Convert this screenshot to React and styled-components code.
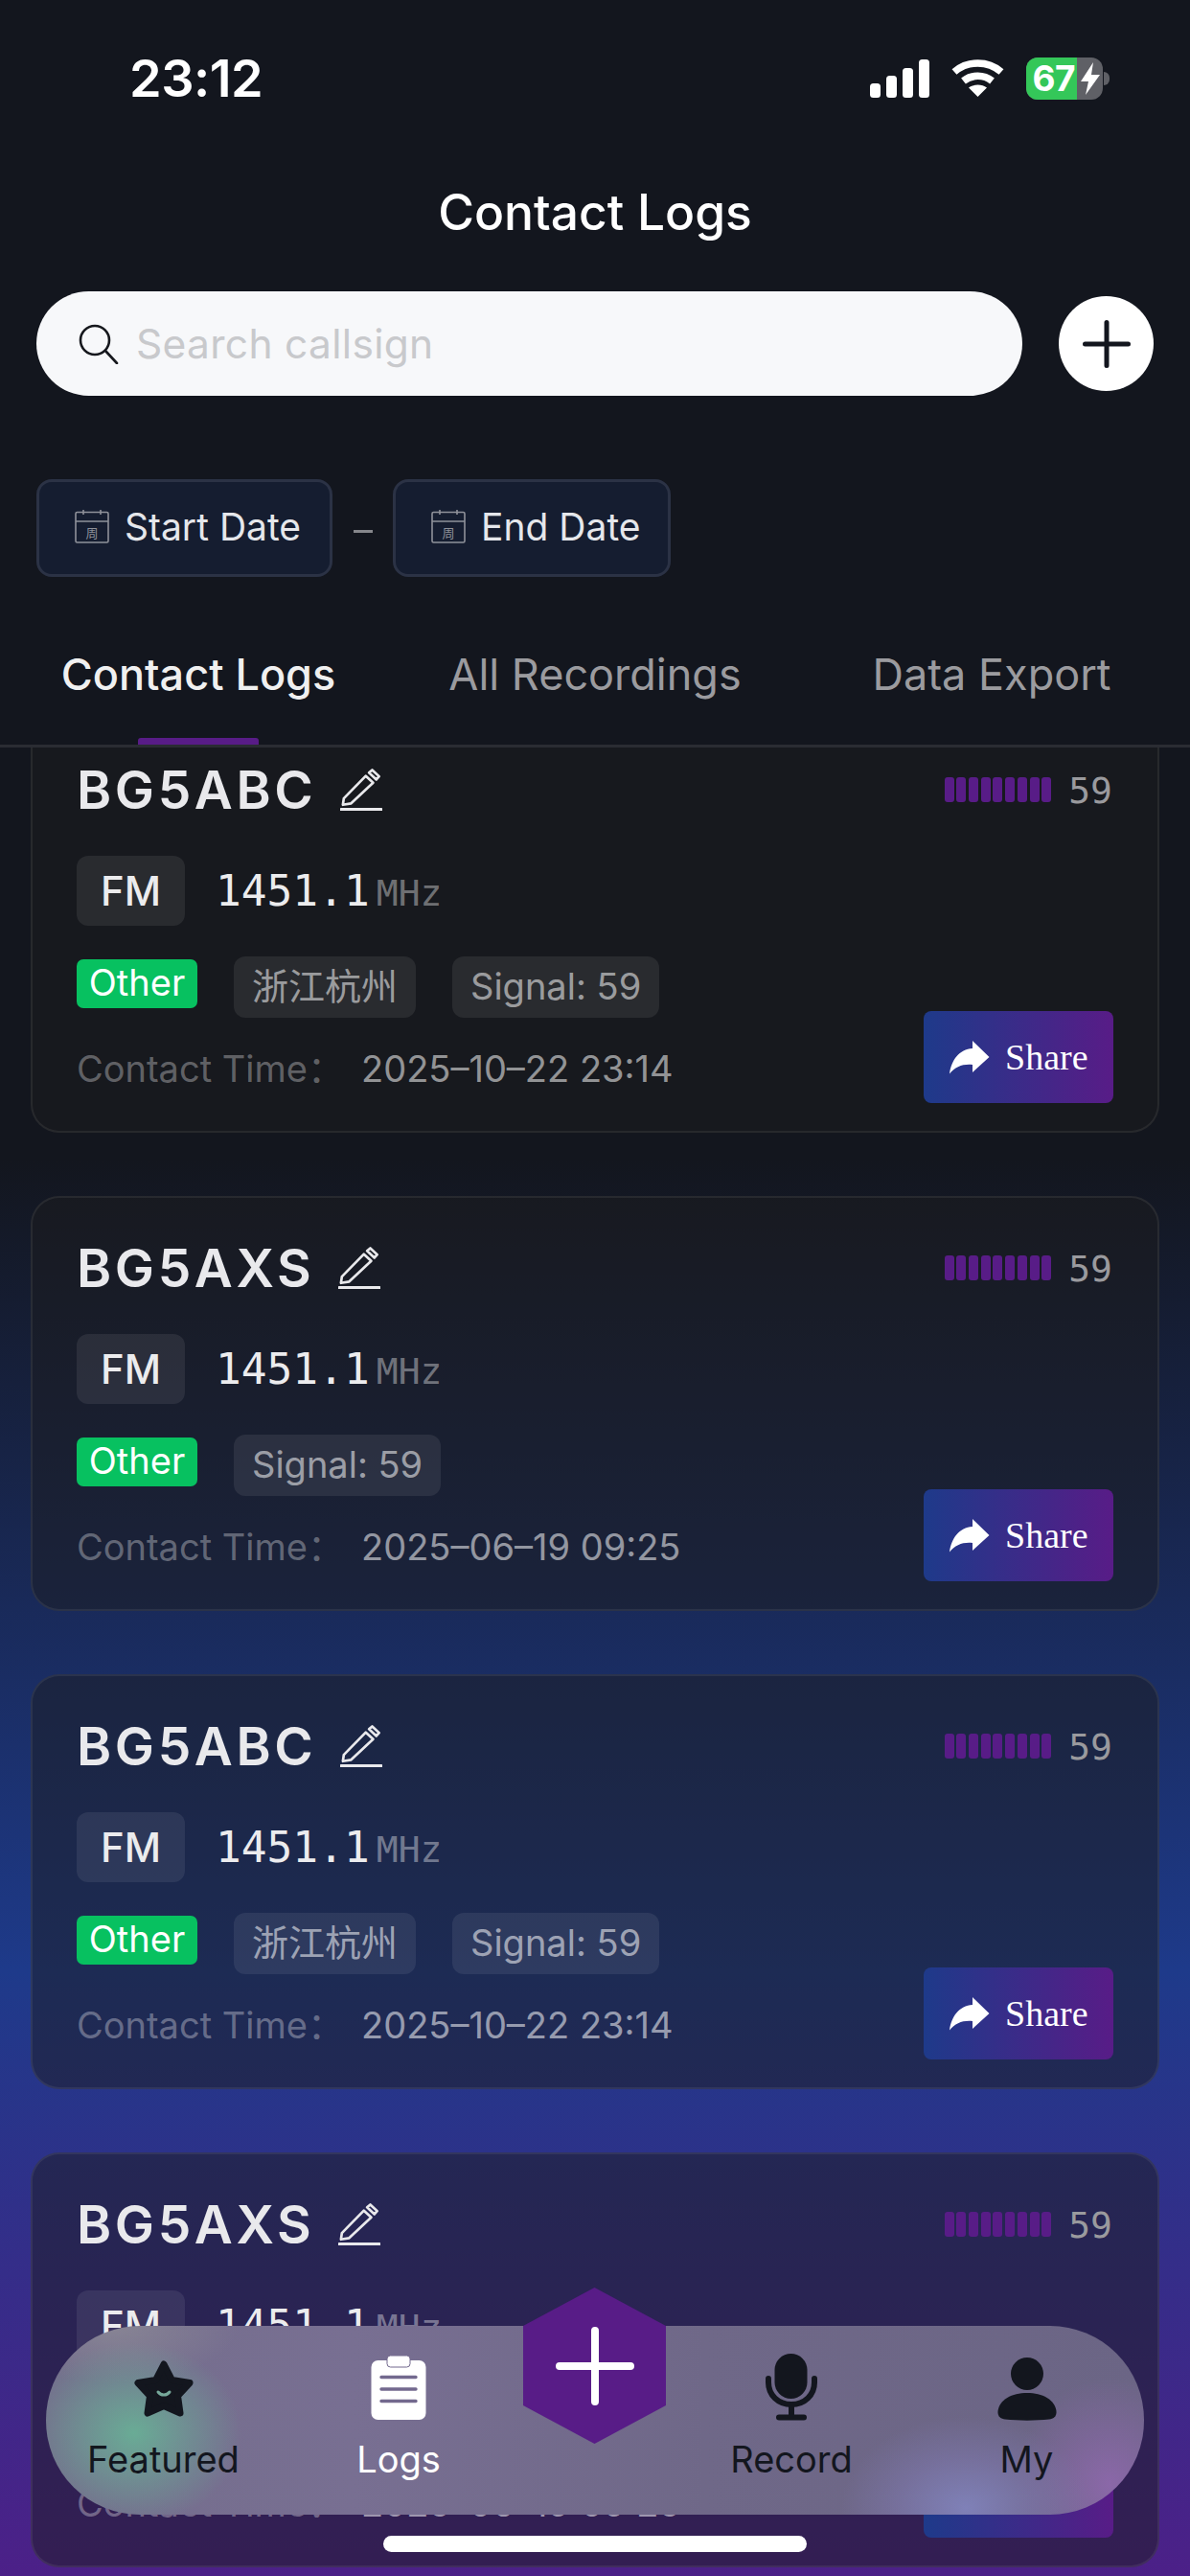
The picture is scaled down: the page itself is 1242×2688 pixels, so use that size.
import React from 'react';
import styled, { createGlobalStyle } from 'styled-components';

const GlobalStyle = createGlobalStyle`
  html, body { margin: 0; padding: 0; background: #13161e; }
  * { box-sizing: border-box; }
`;

const SANS = `Inter, "Noto Sans CJK SC", sans-serif`;
const MONO = `"DejaVu Sans Mono", monospace`;

const Page = styled.div`
  position: relative;
  width: 1242px;
  height: 2688px;
  overflow: hidden;
  display: flex;
  flex-direction: column;
  font-family: ${SANS};
  color: #fff;
  background: linear-gradient(180deg, #13161e 0, #13161e 45%, #1e3a8a 76.5%, #4c2088 100%);
`;

const Header = styled.header`
  position: relative;
  z-index: 2;
  flex: none;
  height: 780px;
  background: #13161e;
  border-bottom: 3px solid #2a2c33;
  display: flex;
  flex-direction: column;
`;

const StatusBar = styled.div`
  height: 164px;
  flex: none;
  display: flex;
  align-items: flex-start;
  justify-content: space-between;
  padding: 58px 84px 0 135px;
`;

const Clock = styled.div`
  font-size: 54px;
  line-height: 48px;
  font-weight: 600;
  letter-spacing: -0.5px;
`;

const StatusIcons = styled.div`
  display: flex;
  align-items: center;
  gap: 23px;
  margin-top: 2px;
`;

const Battery = styled.div`
  position: relative;
  width: 87px;
  height: 44px;
  display: flex;
  align-items: center;
`;

const BatteryBody = styled.div`
  width: 80px;
  height: 44px;
  border-radius: 12px;
  overflow: hidden;
  display: flex;
  background: #5f6066;
`;

const BatteryFill = styled.div`
  width: 53px;
  background: #34c759;
  font-size: 37px;
  font-weight: 700;
  line-height: 44px;
  text-align: right;
  padding-right: 2px;
  letter-spacing: -0.5px;
`;

const BatteryNub = styled.div`
  position: absolute;
  right: 0;
  top: 15px;
  width: 6px;
  height: 14px;
  border-radius: 0 7px 7px 0;
  background: #5f6066;
`;

const BoltSlot = styled.div`
  flex: 1;
  display: flex;
  align-items: center;
  justify-content: center;
`;

const Title = styled.h1`
  margin: 0;
  height: 140px;
  flex: none;
  padding-top: 32px;
  font-size: 51.5px;
  line-height: 50px;
  font-weight: 500;
  text-align: center;
`;

const SearchRow = styled.div`
  display: flex;
  align-items: center;
  gap: 38px;
  padding: 0 38px;
`;

const SearchBox = styled.div`
  flex: none;
  width: 1029px;
  height: 109px;
  border-radius: 55px;
  background: #f7f8fa;
  display: flex;
  align-items: center;
  gap: 18px;
  padding: 0 0 0 44px;
`;

const Placeholder = styled.span`
  color: #c8c9cc;
  font-size: 42.5px;
  letter-spacing: 0.3px;
`;

const AddButton = styled.div`
  width: 99px;
  height: 99px;
  border-radius: 50%;
  background: #fff;
  display: flex;
  align-items: center;
  justify-content: center;
`;

const DateRow = styled.div`
  display: flex;
  align-items: center;
  padding: 87px 0 0 38px;
`;

const DateChip = styled.div`
  height: 102px;
  width: ${p => p.$w}px;
  border: 3px solid #2b3245;
  border-radius: 16px;
  background: #151d30;
  display: flex;
  align-items: center;
  gap: 16px;
  padding: 0 0 4px 37px;
  font-size: 39px;
  color: #e5e7eb;
`;

const DateDash = styled.div`
  width: 20px;
  height: 3px;
  margin: 6px 21px 0 22px;
  background: #85868b;
`;

const Tabs = styled.div`
  display: grid;
  grid-template-columns: repeat(3, 1fr);
  margin-top: auto;
  height: 167px;
`;

const Tab = styled.div`
  position: relative;
  text-align: center;
  padding-top: 69px;
  font-size: 45px;
  line-height: 50px;
  font-weight: ${p => (p.$active ? 500 : 400)};
  color: ${p => (p.$active ? '#f0f0f0' : '#9b9b9f')};
  ${p => p.$active && `
    &::after {
      content: '';
      position: absolute;
      left: 144px;
      bottom: 0;
      width: 126px;
      height: 7px;
      border-radius: 3px 3px 0 0;
      background: #581c87;
    }
  `}
`;

const Scroller = styled.main`
  flex: 1;
  min-height: 0;
  overflow: hidden;
`;

const CardList = styled.div`
  margin-top: -31px;
  padding: 0 32px;
  display: flex;
  flex-direction: column;
  gap: 66px;
`;

const Card = styled.article`
  position: relative;
  height: 433px;
  border-radius: 30px;
  border: 2px solid rgba(255, 255, 255, 0.07);
  background: rgba(28, 28, 30, 0.5);
  padding: 0 47px 0 46px;
  display: flex;
  flex-direction: column;
`;

const CardTop = styled.div`
  display: flex;
  align-items: center;
  justify-content: space-between;
  height: 60px;
  margin-top: 43px;
`;

const CallRow = styled.div`
  display: flex;
  align-items: center;
  gap: 25px;
`;

const Callsign = styled.div`
  font-size: 55px;
  line-height: 60px;
  font-weight: 600;
  letter-spacing: 3.6px;
  color: #e9e9ec;
`;

const SignalMeter = styled.div`
  display: flex;
  align-items: center;
  gap: 18px;
`;

const Bars = styled.div`
  display: flex;
  gap: 2.7px;
`;

const Bar = styled.span`
  width: 10px;
  height: 26px;
  border-radius: 3px;
  background: #581c87;
`;

const SignalValue = styled.span`
  font-family: ${MONO};
  font-size: 38px;
  line-height: 48px;
  padding-top: 2px;
  color: #9a9a9e;
`;

const FreqRow = styled.div`
  display: flex;
  align-items: center;
  gap: 32px;
  margin-top: 39px;
`;

const Mode = styled.div`
  width: 113px;
  height: 73px;
  border-radius: 12px;
  background: rgba(255, 255, 255, 0.08);
  display: flex;
  align-items: center;
  justify-content: center;
  font-size: 42px;
  font-weight: 500;
  color: #ececee;
`;

const Freq = styled.div`
  display: flex;
  align-items: baseline;
  gap: 7px;
  font-family: ${MONO};
  font-size: 44.5px;
  color: #ececee;
`;

const Unit = styled.span`
  font-size: 38px;
  color: rgba(255, 255, 255, 0.4);
`;

const TagRow = styled.div`
  display: flex;
  align-items: flex-start;
  gap: 38px;
  margin-top: 32px;
`;

const TypeTag = styled.div`
  margin-top: 3px;
  height: 51px;
  width: 126px;
  border-radius: 7px;
  background: #07c160;
  font-size: 38px;
  line-height: 49px;
  text-align: center;
  color: #fff;
`;

const InfoTag = styled.div`
  height: 64px;
  padding: 0 19px;
  border-radius: 12px;
  background: rgba(255, 255, 255, 0.08);
  font-size: 38px;
  line-height: 62px;
  color: rgba(255, 255, 255, 0.55);
`;

const TimeRow = styled.div`
  display: flex;
  align-items: center;
  margin-top: 30px;
  font-size: 38px;
  line-height: 46px;
`;

const TimeLabel = styled.span`
  width: 297px;
  color: rgba(255, 255, 255, 0.33);
`;

const TimeValue = styled.span`
  color: rgba(255, 255, 255, 0.55);
`;

const ShareButton = styled.div`
  position: absolute;
  right: 46px;
  bottom: 29px;
  width: 198px;
  height: 96px;
  border-radius: 8px;
  background: linear-gradient(90deg, #1e3a8a, #581c87);
  display: flex;
  align-items: center;
  gap: 16px;
  padding-left: 27px;
  font-family: "Liberation Serif", serif;
  font-size: 38px;
  color: #fff;
`;

const TabBar = styled.nav`
  position: absolute;
  z-index: 3;
  left: 48px;
  top: 2427px;
  width: 1146px;
  height: 197px;
  border-radius: 98px;
  display: grid;
  grid-template-columns: 245px 246px 164px 246px 245px;
  background:
    radial-gradient(ellipse 112px 95px at 92px 112px, rgba(104, 178, 150, 0.9) 0, rgba(106, 172, 150, 0.55) 45%, rgba(110, 130, 140, 0) 100%),
    radial-gradient(ellipse 130px 95px at 960px 190px, rgba(128, 130, 186, 0.95) 0, rgba(124, 118, 170, 0.6) 55%, rgba(110, 100, 140, 0) 100%),
    radial-gradient(ellipse 100px 110px at 1110px 165px, rgba(142, 104, 172, 0.9) 0, rgba(120, 100, 150, 0) 100%),
    radial-gradient(ellipse 130px 60px at 70px 0, rgba(140, 138, 150, 0.8) 0, rgba(120, 116, 140, 0) 100%),
    linear-gradient(90deg, #746e8c 0, #786f92 28%, #6f6888 60%, #6b6585 100%);
`;

const TabItem = styled.div`
  display: flex;
  flex-direction: column;
  align-items: center;
  color: ${p => (p.$active ? '#fff' : '#13161e')};
  font-size: 38px;
  line-height: 46px;
`;

const IconSlot = styled.div`
  height: 116px;
  padding-bottom: 17px;
  display: flex;
  justify-content: center;
  align-items: flex-end;
`;

const HexCell = styled.div`
  position: relative;
`;

const Hex = styled.div`
  position: absolute;
  left: 7px;
  top: -40px;
  width: 149px;
  height: 163px;
  background: #581c87;
  clip-path: polygon(50% 0, 100% 24.5%, 100% 75.5%, 50% 100%, 0 75.5%, 0 24.5%);
  display: flex;
  align-items: center;
  justify-content: center;
`;

const HomeIndicator = styled.div`
  position: absolute;
  z-index: 4;
  left: 400px;
  top: 2646px;
  width: 442px;
  height: 17px;
  border-radius: 9px;
  background: #fff;
`;

const SignalIcon = () => (
  <svg width="62" height="40" viewBox="0 0 62 40" fill="#fff">
    <rect x="0" y="25" width="11" height="15" rx="3.5" />
    <rect x="17" y="17" width="11" height="23" rx="3.5" />
    <rect x="34" y="9" width="11" height="31" rx="3.5" />
    <rect x="51" y="0" width="11" height="40" rx="3.5" />
  </svg>
);

const WifiIcon = () => (
  <svg width="55" height="40" viewBox="0 0 55 40" fill="none" stroke="#fff" strokeWidth="7.5">
    <path d="M3 13 C17 1 38 1 52 13" />
    <path d="M12.5 22.5 C21 15.5 34 15.5 42.5 22.5" />
    <path d="M27.5 39 L18 29.5 C23 25.5 32 25.5 37 29.5 Z" fill="#fff" stroke="none" />
  </svg>
);

const Bolt = () => (
  <svg width="20" height="34" viewBox="0 0 20 34" fill="#fff">
    <path d="M13 0 L0 20 H8 L5 34 L20 13 H11 Z" />
  </svg>
);

const SearchIcon = () => (
  <svg width="42" height="42" viewBox="0 0 42 42" fill="none" stroke="#16181d" strokeWidth="2.6">
    <circle cx="17" cy="17" r="15" />
    <path d="M28 28 L40 41" strokeLinecap="round" />
  </svg>
);

const PlusIcon = ({ size, color, weight }) => (
  <svg width={size} height={size} viewBox={`0 0 ${size} ${size}`} stroke={color} strokeWidth={weight} strokeLinecap="round">
    <path d={`M${size / 2} ${weight / 2} V${size - weight / 2} M${weight / 2} ${size / 2} H${size - weight / 2}`} />
  </svg>
);

const CalendarIcon = () => (
  <svg width="36" height="36" viewBox="0 0 36 36" fill="none" stroke="#8f929a" strokeWidth="1.6">
    <rect x="1" y="3.5" width="34" height="31.5" rx="1.5" />
    <path d="M1 13 H35 M9 1 V6 M27 1 V6" />
    <text x="18" y="30" fontSize="13" textAnchor="middle" fill="#8f929a" stroke="none" fontFamily="Noto Sans CJK SC">周</text>
  </svg>
);

const PencilIcon = ({ color }) => (
  <svg width="44" height="44" viewBox="0 0 46 46" fill="none" stroke={color} strokeWidth="2.8" strokeLinejoin="round">
    <path d="M4 32.5 L28 8 L36 15.5 L12 38 L3 39.5 Z" />
    <path d="M31.5 4.5 L35 1.5 L42.5 8.5 L39.5 12 Z" />
    <path d="M1 44.5 H45" strokeWidth="3.4" strokeLinecap="round" />
  </svg>
);

const ShareArrow = () => (
  <svg width="42" height="35" viewBox="0 0 42 35" fill="#fff">
    <path d="M24 0 L41.5 17 L24 33 V25 C14 24 6 27 0 34.5 C2 20 10 9 24 8 Z" />
  </svg>
);

const StarIcon = () => (
  <svg width="62" height="63" viewBox="0 0 62 63">
    <path
      d="M31 4 L39.5 20.5 L58 23.5 L45.5 37 L48 55 L31 47.5 L14 55 L16.5 37 L4 23.5 L22.5 20.5 Z"
      fill="#13161e"
      stroke="#13161e"
      strokeWidth="7"
      strokeLinejoin="round"
    />
    <path d="M25 33 C28 37 34 37 37 33" fill="none" stroke="#76a89a" strokeWidth="3" strokeLinecap="round" />
  </svg>
);

const ClipboardIcon = () => (
  <svg width="58" height="68" viewBox="0 0 58 68">
    <rect x="0.5" y="5" width="57" height="62" rx="7" fill="#fff" />
    <rect x="17" y="0" width="24" height="12" rx="3.5" fill="#fff" stroke="#73698e" strokeWidth="1" />
    <path d="M11 22.5 H47 M11 35 H47 M11 47.5 H47" stroke="#73698e" strokeWidth="3.4" strokeLinecap="round" />
  </svg>
);

const MicIcon = () => (
  <svg width="54" height="70" viewBox="0 0 54 70" fill="none">
    <rect x="9.5" y="0" width="34" height="47" rx="17" fill="#13161e" />
    <path d="M3 26 V30 C3 43 13 53 27 53 C41 53 51 43 51 30 V26" stroke="#13161e" strokeWidth="6" strokeLinecap="round" />
    <path d="M27 53 V65" stroke="#13161e" strokeWidth="6" />
    <path d="M14 66.5 H40" stroke="#13161e" strokeWidth="6" strokeLinecap="round" />
  </svg>
);

const PersonIcon = () => (
  <svg width="62" height="66" viewBox="0 0 62 66" fill="#13161e">
    <circle cx="31" cy="17" r="17" />
    <path d="M0.5 56 C2 44 15 37 31 37 C47 37 60 44 61.5 56 C62 62 58 64 54 64.5 C40 66 22 66 8 64.5 C4 64 0 62 0.5 56 Z" />
  </svg>
);

const cards = [
  { call: 'BG5ABC', place: '浙江杭州', time: '2025–10–22 23:14' },
  { call: 'BG5AXS', time: '2025–06–19 09:25' },
  { call: 'BG5ABC', place: '浙江杭州', time: '2025–10–22 23:14' },
  { call: 'BG5AXS', time: '2025–06–19 09:25' },
];

const LogCard = ({ call, place, time }) => (
  <Card>
    <CardTop>
      <CallRow>
        <Callsign>{call}</Callsign>
        <PencilIcon color="#e9e9ec" />
      </CallRow>
      <SignalMeter>
        <Bars>
          {Array.from({ length: 9 }, (_, i) => (
            <Bar key={i} />
          ))}
        </Bars>
        <SignalValue>59</SignalValue>
      </SignalMeter>
    </CardTop>
    <FreqRow>
      <Mode>FM</Mode>
      <Freq>
        1451.1<Unit>MHz</Unit>
      </Freq>
    </FreqRow>
    <TagRow>
      <TypeTag>Other</TypeTag>
      {place && <InfoTag>{place}</InfoTag>}
      <InfoTag>Signal: 59</InfoTag>
    </TagRow>
    <TimeRow>
      <TimeLabel>Contact Time：</TimeLabel>
      <TimeValue>{time}</TimeValue>
    </TimeRow>
    <ShareButton>
      <ShareArrow />
      Share
    </ShareButton>
  </Card>
);

export default function App() {
  return (
    <Page>
      <GlobalStyle />
      <Header>
        <StatusBar>
          <Clock>23:12</Clock>
          <StatusIcons>
            <SignalIcon />
            <WifiIcon />
            <Battery>
              <BatteryBody>
                <BatteryFill>67</BatteryFill>
                <BoltSlot>
                  <Bolt />
                </BoltSlot>
              </BatteryBody>
              <BatteryNub />
            </Battery>
          </StatusIcons>
        </StatusBar>
        <Title>Contact Logs</Title>
        <SearchRow>
          <SearchBox>
            <SearchIcon />
            <Placeholder>Search callsign</Placeholder>
          </SearchBox>
          <AddButton>
            <PlusIcon size={50} color="#13161e" weight={5} />
          </AddButton>
        </SearchRow>
        <DateRow>
          <DateChip $w={309}>
            <CalendarIcon />
            Start Date
          </DateChip>
          <DateDash />
          <DateChip $w={290}>
            <CalendarIcon />
            End Date
          </DateChip>
        </DateRow>
        <Tabs>
          <Tab $active>Contact Logs</Tab>
          <Tab>All Recordings</Tab>
          <Tab>Data Export</Tab>
        </Tabs>
      </Header>
      <Scroller>
        <CardList>
          {cards.map((c, i) => (
            <LogCard key={i} {...c} />
          ))}
        </CardList>
      </Scroller>
      <TabBar>
        <TabItem>
          <IconSlot>
            <StarIcon />
          </IconSlot>
          Featured
        </TabItem>
        <TabItem $active>
          <IconSlot>
            <ClipboardIcon />
          </IconSlot>
          Logs
        </TabItem>
        <HexCell>
          <Hex>
            <PlusIcon size={82} color="#fff" weight={8} />
          </Hex>
        </HexCell>
        <TabItem>
          <IconSlot>
            <MicIcon />
          </IconSlot>
          Record
        </TabItem>
        <TabItem>
          <IconSlot>
            <PersonIcon />
          </IconSlot>
          My
        </TabItem>
      </TabBar>
      <HomeIndicator />
    </Page>
  );
}
